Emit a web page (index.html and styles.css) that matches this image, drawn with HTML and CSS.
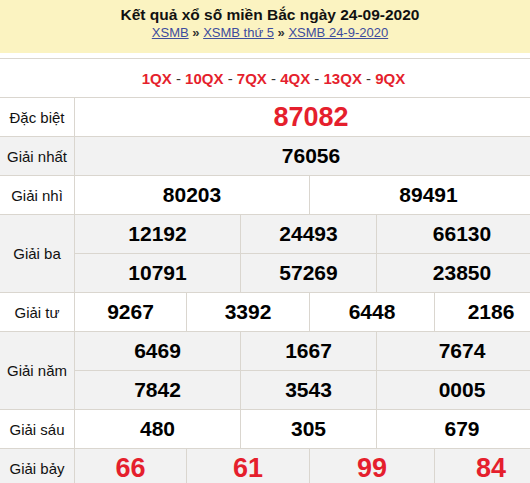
FILE: index.html
```html
<!DOCTYPE html>
<html lang="vi">
<head>
<meta charset="utf-8">
<title>Kết quả xổ số miền Bắc ngày 24-09-2020</title>
<link rel="stylesheet" href="styles.css">
</head>
<body>
<div class="page">
  <header class="head">
    <h2 class="title">Kết quả xổ số miền Bắc ngày 24-09-2020</h2>
    <div class="crumbs"><a href="#">XSMB</a> <b>»</b> <a href="#">XSMB thứ 5</a> <b>»</b> <a href="#">XSMB 24-9-2020</a></div>
  </header>
  <div class="results">
    <div class="codes">
      <span class="code">1QX</span> - <span class="code">10QX</span> - <span class="code">7QX</span> - <span class="code">4QX</span> - <span class="code">13QX</span> - <span class="code">9QX</span>
    </div>

    <div class="lbl">Đặc biệt</div>
    <div class="num big red c-all">87082</div>

    <div class="lbl alt">Giải nhất</div>
    <div class="num alt c-all">76056</div>

    <div class="lbl">Giải nhì</div>
    <div class="num c-h1">80203</div>
    <div class="num c-h2 last">89491</div>

    <div class="lbl alt tall">Giải ba</div>
    <div class="num alt c-t1">12192</div>
    <div class="num alt c-t2">24493</div>
    <div class="num alt c-t3 last">66130</div>
    <div class="num alt c-t1">10791</div>
    <div class="num alt c-t2">57269</div>
    <div class="num alt c-t3 last">23850</div>

    <div class="lbl">Giải tư</div>
    <div class="num c-q1">9267</div>
    <div class="num c-q2">3392</div>
    <div class="num c-q3">6448</div>
    <div class="num c-q4 last">2186</div>

    <div class="lbl alt tall">Giải năm</div>
    <div class="num alt c-t1">6469</div>
    <div class="num alt c-t2">1667</div>
    <div class="num alt c-t3 last">7674</div>
    <div class="num alt c-t1">7842</div>
    <div class="num alt c-t2">3543</div>
    <div class="num alt c-t3 last">0005</div>

    <div class="lbl">Giải sáu</div>
    <div class="num c-t1">480</div>
    <div class="num c-t2">305</div>
    <div class="num c-t3 last">679</div>

    <div class="lbl alt">Giải bảy</div>
    <div class="num alt big red c-q1">66</div>
    <div class="num alt big red c-q2">61</div>
    <div class="num alt big red c-q3">99</div>
    <div class="num alt big red c-q4 last">84</div>
  </div>
</div>
</body>
</html>
```

FILE: styles.css
```css
html, body {
  margin: 0;
  padding: 0;
  overflow: hidden;
  background: #fff;
}

body {
  font-family: "Liberation Sans", Arial, sans-serif;
  color: #000;
}

.page {
  width: 546px;
}

.head {
  width: 540px;
  background: #fbf3c1;
  text-align: center;
  padding: 5px 0 11px;
  box-sizing: border-box;
  height: 53px;
}

.title {
  margin: 0;
  font-size: 15.5px;
  line-height: 19px;
  font-weight: bold;
  color: #111;
}

.crumbs {
  font-size: 13px;
  line-height: 18px;
  color: #333;
}

.crumbs a {
  color: #3d4c9e;
  text-decoration: underline;
}

.crumbs b {
  color: #333;
}

.results {
  margin-top: 5px;
  border-top: 1px solid #dad6cf;
  display: grid;
  grid-template-columns: 75px 112px 54px 69px 67px 58px 112px;
  grid-auto-rows: 39px;
}

.results > div {
  box-sizing: border-box;
  border-bottom: 1px solid #dad6cf;
  display: flex;
  align-items: center;
  justify-content: center;
}

.codes {
  grid-column: 1 / -1;
  font-size: 15px;
  color: #333;
  white-space: pre;
}

.code {
  color: #e51f2d;
  font-weight: bold;
}

.lbl {
  grid-column: 1;
  font-size: 15px;
  color: #111;
  border-right: 1px solid #dad6cf;
}

.tall {
  grid-row: span 2;
}

.num {
  font-size: 21px;
  font-weight: bold;
  border-right: 1px solid #dad6cf;
}

.num.last {
  border-right: none;
}

.alt {
  background: #f2f2f2;
}

.big {
  font-size: 27px;
}

.red {
  color: #e51f2d;
}

.c-all { grid-column: 2 / 8; border-right: none; }
.c-h1 { grid-column: 2 / 5; }
.c-h2 { grid-column: 5 / 8; }
.c-t1 { grid-column: 2 / 4; }
.c-t2 { grid-column: 4 / 6; }
.c-t3 { grid-column: 6 / 8; }
.c-q1 { grid-column: 2 / 3; }
.c-q2 { grid-column: 3 / 5; }
.c-q3 { grid-column: 5 / 7; }
.c-q4 { grid-column: 7 / 8; }
```
